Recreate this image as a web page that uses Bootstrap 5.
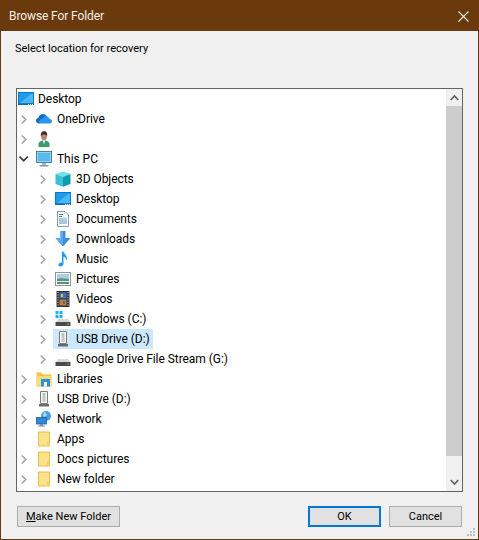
<!DOCTYPE html>
<html lang="en"><head><meta charset="utf-8"><title>Browse For Folder</title>
<link href="https://cdn.jsdelivr.net/npm/bootstrap@5.3.0/dist/css/bootstrap.min.css" rel="stylesheet">
<style>
html,body{margin:0;height:540px;overflow:hidden}
body{font-family:Roboto,"Noto Sans","Liberation Sans",sans-serif;font-size:12px;line-height:20px;color:#000;background:#f0f0f0}
.dlg{width:479px;height:540px;border:1px solid #6b3a0c;background:#f0f0f0;position:relative}
.titlebar{height:30px;background:#6b3a0c;color:#f4efe9;padding-left:8px;padding-right:9px;letter-spacing:-.1px}
.prompt{padding:8px 0 0 14px;height:57px;font-size:11px}
.treebox{margin-left:15px;width:447px;height:404px;border:1px solid #646464;background:#fff}
.treelist{width:429px}
.trow{height:20px;white-space:nowrap;letter-spacing:-.05px}
.tlv1{padding-left:2px}.tlv2{padding-left:21px}
.chev{width:15px;height:20px;flex:none}
.ico{width:16px;height:16px;flex:none;margin:0 5px 0 2px}
.tlv0 .ico{margin:0 4px 0 1px}
.sel{background:#cce8ff;height:20px;width:100px}
.sb{width:16px;background:#f0f0f0}
.sbbtn{height:17px;flex:none}
.sbthumb{background:#cdcdcd;height:350px;flex:none}
.footbar{padding:14px 0 0 16px;width:461px}
.wbtn{height:21px;padding:0;border:1px solid #adadad;border-radius:0;background:#e1e1e1;color:#000;font-size:11px;line-height:19px;--bs-btn-hover-bg:#e1e1e1}
.w103{width:103px}.w73{width:73px}
.wdef{border:2px solid #0078d7;line-height:17px}
.grip{position:absolute;right:1px;bottom:1px;width:12px;height:12px}
</style></head><body>
<svg width="0" height="0" class="position-absolute">
<defs>
<symbol id="c" viewBox="0 0 15 20"><path d="M2.800 6.500 6.800 10.500 2.800 14.500" fill="none" stroke="#a6a6a6" stroke-width="1.700"/></symbol>
<symbol id="co" viewBox="0 0 15 20"><path d="M.5 7.500 4.700 11.700 8.900 7.500" fill="none" stroke="#404040" stroke-width="1.700"/></symbol>
<symbol id="desk" viewBox="0 0 16 16"><rect x=".5" y="1.500" width="15" height="12" fill="#1f9bee" stroke="#0b78c9"/><path d="M2 12 13 3h2v9z" fill="#4bb8f5"/><path d="M1 12.500h14v1H1z" fill="#0a5fa8"/><path d="M10 13h1v1h-1zM12 13h1v1h-1zM14 13h1v1h-1z" fill="#fff"/></symbol>
<symbol id="od" viewBox="0 0 16 16"><path d="M3.500 12.500C1.300 12.500 0 11.200 0 9.500 0 8 1 6.900 2.500 6.700 3.200 4.300 4.900 3 7 3c1.800 0 3.200 1 3.900 2.500" fill="#0f6fc4"/><path d="M3.500 12.500h10.300c1.300 0 2.200-1 2.200-2.200 0-1.300-1-2.200-2.400-2.200C13 6.500 11.600 5.300 10 5.300 8.200 5.300 6.800 6.500 6.400 8.100 4.500 8 3 9.200 3 10.800c0 .7.200 1.200.5 1.700z" fill="#2a95ea"/></symbol>
<symbol id="user" viewBox="0 0 16 16"><path d="M2.500 16v-3c0-2 2.300-3.500 5.500-3.500s5.500 1.500 5.500 3.500v3z" fill="#3f9a70"/><path d="M7 9.500h2l-.5 3h-1z" fill="#fff"/><ellipse cx="8" cy="5.300" rx="3" ry="3.900" fill="#b98a6a"/><path d="M4.800 5c-.3-2.800 1-4.800 3.400-4.800S11.500 2.200 11.200 5c-.8-1-1.700-1.600-3.200-1.600S5.600 4 4.800 5z" fill="#3b2c24"/></symbol>
<symbol id="pc" viewBox="0 0 16 16"><rect x=".5" y=".5" width="15" height="11" fill="#8fd3f7" stroke="#4d7f9f"/><path d="M2 2h12v8H2z" fill="#5db9ee"/><path d="M6 12h4v2H6z" fill="#a9b8c2"/><path d="M3.500 14h9v1.500h-9z" fill="#7e97a8"/></symbol>
<symbol id="cube" viewBox="0 0 16 16"><path d="M8 .5 15.500 3 8 5.700.5 3z" fill="#6fe0ec"/><path d="M.5 3 8 5.700v10L.5 13z" fill="#3cc0d4"/><path d="M15.500 3 8 5.700v10l7.500-2.700z" fill="#109bb0"/></symbol>
<symbol id="doc" viewBox="0 0 16 16"><path d="M2.500.5H10L13.500 4v11.500h-11z" fill="#fff" stroke="#8a9aa8"/><path d="M4 3.500h4M4 5.500h3" stroke="#2c7fc4"/><path d="M4 8h8M4 10h8M4 12h8" stroke="#5a8fb8"/><path d="M8 6.500h4v2H8z" fill="#bcd6ea"/></symbol>
<symbol id="dl" viewBox="0 0 16 16"><path d="M5.500 0h5v7H15.500L8 15.500.5 7h5z" fill="#3a8fe0"/><path d="M5.500 0h2.500v15L.5 7h5z" fill="#5ba8ee"/></symbol>
<symbol id="mus" viewBox="0 0 16 16"><path d="M7 .5h1.500c.3 2.500 3.500 3.500 3.500 7 0 .6-.1 1.300-.5 2 0-2-1.500-3.500-3-4V12.500C8.500 14.500 6.500 15.700 5 15.500 3.400 15.300 3 13.800 4 12.600c.7-.9 2-1.300 3-1z" fill="#1e9bf0"/></symbol>
<symbol id="pic" viewBox="0 0 16 16"><rect x=".5" y="1.500" width="15" height="13" fill="#fff" stroke="#8795a0"/><path d="M2 3h12v5H2z" fill="#a8cfe6"/><path d="M2 8c3-1.500 6-.5 12 0v5H2z" fill="#5f8f78"/><path d="M2 10h12v1H2z" fill="#dfeef0"/></symbol>
<symbol id="vid" viewBox="0 0 16 16"><path d="M1.500 0h13v16h-13z" fill="#30343a"/><path d="M4.500 1.500h7v6h-7z" fill="#3a72c4"/><path d="M4.500 8.500h7v6h-7z" fill="#c97a2a"/><path d="M6 3h2v3H6z" fill="#e0c23a"/><path d="M8 10h2v3H8z" fill="#2d6fc0"/><path d="M2.500 1h1v1h-1zM2.500 3.500h1v1h-1zM2.500 6h1v1h-1zM2.500 8.500h1v1h-1zM2.500 11h1v1h-1zM2.500 13.500h1v1h-1zM12.500 1h1v1h-1zM12.500 3.500h1v1h-1zM12.500 6h1v1h-1zM12.500 8.500h1v1h-1zM12.500 11h1v1h-1zM12.500 13.500h1v1h-1z" fill="#e8e8e8"/></symbol>
<symbol id="win" viewBox="0 0 16 16"><path d="M.5 0h3v3h-3zM4.500 0h3v3h-3zM.5 4h3v3h-3zM4.500 4h3v3h-3z" fill="#18b0f0"/><path d="M3 8h10l2.500 3H.500z" fill="#d8d8d8"/><path d="M.5 11h15v4H.5z" fill="#4a4a4a"/><path d="M12 12.500h2v1h-2z" fill="#68d868"/></symbol>
<symbol id="gd" viewBox="0 0 16 16"><path d="M3 8h10l2.500 3H.500z" fill="#d8d8d8"/><path d="M.5 11h15v4H.5z" fill="#4a4a4a"/><path d="M12 12.500h2v1h-2z" fill="#8a8a8a"/></symbol>
<symbol id="usb" viewBox="0 0 16 16"><path d="M4.500.5h7v12h-7z" fill="#f4f4f4" stroke="#7c7c7c"/><path d="M6.500 2h3v9h-3z" fill="#c9c9c9"/><path d="M7 2.500h2v2H7z" fill="#9ccf9c"/><path d="M3 13h10v2.500H3z" fill="#6a6a6a"/></symbol>
<symbol id="lib" viewBox="0 0 16 16"><path d="M.5 1.500h5l1.500 2h8.500v12H.5z" fill="#f3c440"/><path d="M.5 5h15v10.500H.5z" fill="#fbdc7a"/><path d="M5 8h9v7.500H5z" fill="#2a90e0"/><path d="M8 11h3v4.500H8z" fill="#fff"/></symbol>
<symbol id="net" viewBox="0 0 16 16"><circle cx="10" cy="5" r="5" fill="#4a9fd8"/><path d="M8 1c2 .5 3 2 2.500 3.500S8 6 7 5z" fill="#a8dcf5"/><path d="M.5 6.500h10v6.500H.5z" fill="#2d88d8" stroke="#1e5f9c" stroke-width=".8"/><path d="M4 13h3v1.500H4zM2 14.500h7v1H2z" fill="#7c8c98"/></symbol>
<symbol id="fo" viewBox="0 0 16 16"><path d="M2.500 1h11v14h-11z" fill="#fde28c" stroke="#e6be4a"/><path d="M11 10.500h2.500V15H11z" fill="#fbd062"/></symbol>
</defs></svg>

<div class="dlg d-flex flex-column">
  <div class="titlebar d-flex align-items-center justify-content-between">
    <span>Browse For Folder</span>
    <svg width="11" height="11" viewBox="0 0 11 11" aria-label="Close"><path d="M.5.500l10 10M10.500.500l-10 10" stroke="#f4efe9" stroke-width="1.100"/></svg>
  </div>
  <div class="prompt">Select location for recovery</div>
  <div class="treebox d-flex">
    <div class="treelist flex-grow-1">
      <div class="trow d-flex align-items-center tlv0"><svg class="ico"><use href="#desk"/></svg><span>Desktop</span></div>
      <div class="trow d-flex align-items-center tlv1"><svg class="chev"><use href="#c"/></svg><svg class="ico"><use href="#od"/></svg><span>OneDrive</span></div>
      <div class="trow d-flex align-items-center tlv1"><svg class="chev"><use href="#c"/></svg><svg class="ico"><use href="#user"/></svg></div>
      <div class="trow d-flex align-items-center tlv1"><svg class="chev"><use href="#co"/></svg><svg class="ico"><use href="#pc"/></svg><span>This PC</span></div>
      <div class="trow d-flex align-items-center tlv2"><svg class="chev"><use href="#c"/></svg><svg class="ico"><use href="#cube"/></svg><span>3D Objects</span></div>
      <div class="trow d-flex align-items-center tlv2"><svg class="chev"><use href="#c"/></svg><svg class="ico"><use href="#desk"/></svg><span>Desktop</span></div>
      <div class="trow d-flex align-items-center tlv2"><svg class="chev"><use href="#c"/></svg><svg class="ico"><use href="#doc"/></svg><span>Documents</span></div>
      <div class="trow d-flex align-items-center tlv2"><svg class="chev"><use href="#c"/></svg><svg class="ico"><use href="#dl"/></svg><span>Downloads</span></div>
      <div class="trow d-flex align-items-center tlv2"><svg class="chev"><use href="#c"/></svg><svg class="ico"><use href="#mus"/></svg><span>Music</span></div>
      <div class="trow d-flex align-items-center tlv2"><svg class="chev"><use href="#c"/></svg><svg class="ico"><use href="#pic"/></svg><span>Pictures</span></div>
      <div class="trow d-flex align-items-center tlv2"><svg class="chev"><use href="#c"/></svg><svg class="ico"><use href="#vid"/></svg><span>Videos</span></div>
      <div class="trow d-flex align-items-center tlv2"><svg class="chev"><use href="#c"/></svg><svg class="ico"><use href="#win"/></svg><span>Windows (C:)</span></div>
      <div class="trow d-flex align-items-center tlv2"><svg class="chev"><use href="#c"/></svg><div class="sel d-flex align-items-center"><svg class="ico"><use href="#usb"/></svg><span>USB Drive (D:)</span></div></div>
      <div class="trow d-flex align-items-center tlv2"><svg class="chev"><use href="#c"/></svg><svg class="ico"><use href="#gd"/></svg><span>Google Drive File Stream (G:)</span></div>
      <div class="trow d-flex align-items-center tlv1"><svg class="chev"><use href="#c"/></svg><svg class="ico"><use href="#lib"/></svg><span>Libraries</span></div>
      <div class="trow d-flex align-items-center tlv1"><svg class="chev"><use href="#c"/></svg><svg class="ico"><use href="#usb"/></svg><span>USB Drive (D:)</span></div>
      <div class="trow d-flex align-items-center tlv1"><svg class="chev"><use href="#c"/></svg><svg class="ico"><use href="#net"/></svg><span>Network</span></div>
      <div class="trow d-flex align-items-center tlv1"><span class="chev"></span><svg class="ico"><use href="#fo"/></svg><span>Apps</span></div>
      <div class="trow d-flex align-items-center tlv1"><svg class="chev"><use href="#c"/></svg><svg class="ico"><use href="#fo"/></svg><span>Docs pictures</span></div>
      <div class="trow d-flex align-items-center tlv1"><svg class="chev"><use href="#c"/></svg><svg class="ico"><use href="#fo"/></svg><span>New folder</span></div>
    </div>
    <div class="sb d-flex flex-column">
      <div class="sbbtn d-flex align-items-center justify-content-center"><svg width="9" height="7" viewBox="0 0 9 7"><path d="M.7 6 4.500 2l3.800 4" fill="none" stroke="#606060" stroke-width="1.700"/></svg></div>
      <div class="sbthumb"></div>
      <div class="flex-grow-1"></div>
      <div class="sbbtn d-flex align-items-center justify-content-center"><svg width="9" height="7" viewBox="0 0 9 7"><path d="M.7 1l3.800 4 3.800-4" fill="none" stroke="#606060" stroke-width="1.700"/></svg></div>
    </div>
  </div>
  <div class="footbar d-flex">
    <button type="button" class="btn wbtn w103"><u>M</u>ake New Folder</button>
    <button type="button" class="btn wbtn w73 wdef ms-auto">OK</button>
    <button type="button" class="btn wbtn w73 ms-2">Cancel</button>
  </div>
  <svg class="grip" viewBox="0 0 12 12"><path d="M8 2h2v2H8zM5 5h2v2H5zM8 5h2v2H8zM2 8h2v2H2zM5 8h2v2H5zM8 8h2v2H8z" fill="#c0c0c0"/></svg>
</div>
</body></html>
